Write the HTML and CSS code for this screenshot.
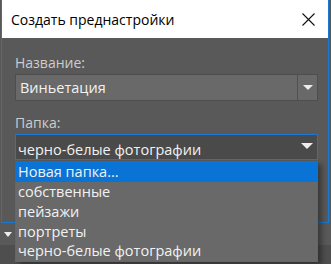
FILE: index.html
```html
<!DOCTYPE html>
<html lang="ru">
<head>
    <meta charset="UTF-8">
    <meta name="viewport" content="width=device-width, initial-scale=1.0">
    <title>Создать преднастройки</title>
    <link rel="stylesheet" href="styles.css">
</head>
<body>
    <div class="dialog">
        <div class="titlebar">
            <span class="title">Создать преднастройки</span>
            <svg class="close" width="13" height="13" viewBox="0 0 13 13">
                <path d="M0.5 0.5 L12.5 12.5 M12.5 0.5 L0.5 12.5" stroke="#111" stroke-width="1.1" fill="none"/>
            </svg>
        </div>

        <div class="content">
            <div class="field">
                <div class="label">Название:</div>
                <div class="select name-select">
                    <span class="value">Виньетация</span>
                    <span class="arrow-btn"><span class="tri"></span></span>
                </div>
            </div>

            <div class="field">
                <div class="label">Папка:</div>
                <div class="select folder-select">
                    <span class="value">черно-белые фотографии</span>
                    <span class="tri"></span>
                </div>
                <ul class="dropdown">
                    <li class="active">Новая папка...</li>
                    <li>собственные</li>
                    <li>пейзажи</li>
                    <li>портреты</li>
                    <li>черно-белые фотографии</li>
                </ul>
            </div>
        </div>
    </div>

    <div class="panel">
        <div class="section">
            <span class="tri small"></span>
        </div>
        <div class="footer"></div>
    </div>
</body>
</html>
```

FILE: styles.css
```css
body {
    margin: 0;
    width: 331px;
    height: 264px;
    overflow: hidden;
    font-family: "Open Sans", "Noto Sans", sans-serif;
    background: #595959;
}
.dialog {
    position: relative;
    z-index: 1;
    width: 328px;
    height: 223px;
    margin-left: 1px;
    box-sizing: border-box;
    border: 1px solid #1a78d0;
    border-top: none;
    background: #595959;
}
.titlebar {
    height: 38px;
    background: #fff;
    display: flex;
    align-items: center;
    justify-content: space-between;
    padding: 0 13px 0 9px;
}
.title {
    font-size: 14px;
    color: #000;
}
.content {
    padding: 14px 10px 0 13px;
}
.field {
    position: relative;
    margin-bottom: 11px;
}
.label {
    font-size: 14px;
    color: #cdcdcd;
    height: 21px;
    line-height: 20px;
    padding-top: 1px;
}
.select {
    display: flex;
    justify-content: space-between;
    box-sizing: border-box;
    font-size: 14.5px;
    color: #f2f2f2;
}
.name-select {
    height: 27px;
    align-items: center;
    background: #696969;
    border: 1px solid #4e4e4e;
}
.name-select .value {
    padding-left: 4px;
    line-height: 20px;
}
.arrow-btn {
    width: 19px;
    height: 100%;
    border-left: 1px solid #505050;
    display: flex;
    align-items: center;
    justify-content: center;
}
.arrow-btn .tri {
    border-left-width: 5px;
    border-right-width: 5px;
    border-top-width: 5px;
}
.folder-select {
    height: 26px;
    align-items: flex-end;
    background: #4a4a4a;
    border: 1px solid #1a78d0;
    padding: 0 4px 0 2px;
}
.folder-select .value {
    line-height: 19px;
}
.folder-select .tri {
    align-self: center;
    margin: 0 0 2px;
}
.tri {
    width: 0;
    height: 0;
    border-left: 6px solid transparent;
    border-right: 6px solid transparent;
    border-top: 6px solid #ededed;
}
.dropdown {
    position: absolute;
    top: calc(100% + 1px);
    left: 0;
    right: 0;
    margin: 0;
    padding: 0;
    list-style: none;
    background: #696969;
    border: 1px solid #1a78d0;
    border-top: none;
    box-shadow: 4px 3px 5px rgba(0, 0, 0, 0.35);
}
.dropdown li {
    font-size: 14.5px;
    color: #f2f2f2;
    height: 19.75px;
    line-height: 19.75px;
    padding-left: 2px;
}
.dropdown li.active {
    background: #0a74d6;
    height: 20px;
    line-height: 20px;
    padding-top: 1px;
    margin: 0 -1px;
    padding-left: 3px;
}
.panel {
    height: 41px;
}
.section {
    height: 22px;
    display: flex;
    align-items: center;
    padding-left: 4px;
}
.tri.small {
    border-left-width: 4px;
    border-right-width: 4px;
    border-top-width: 5px;
}
.footer {
    height: 19px;
    background: #4e4e4e;
}
```
